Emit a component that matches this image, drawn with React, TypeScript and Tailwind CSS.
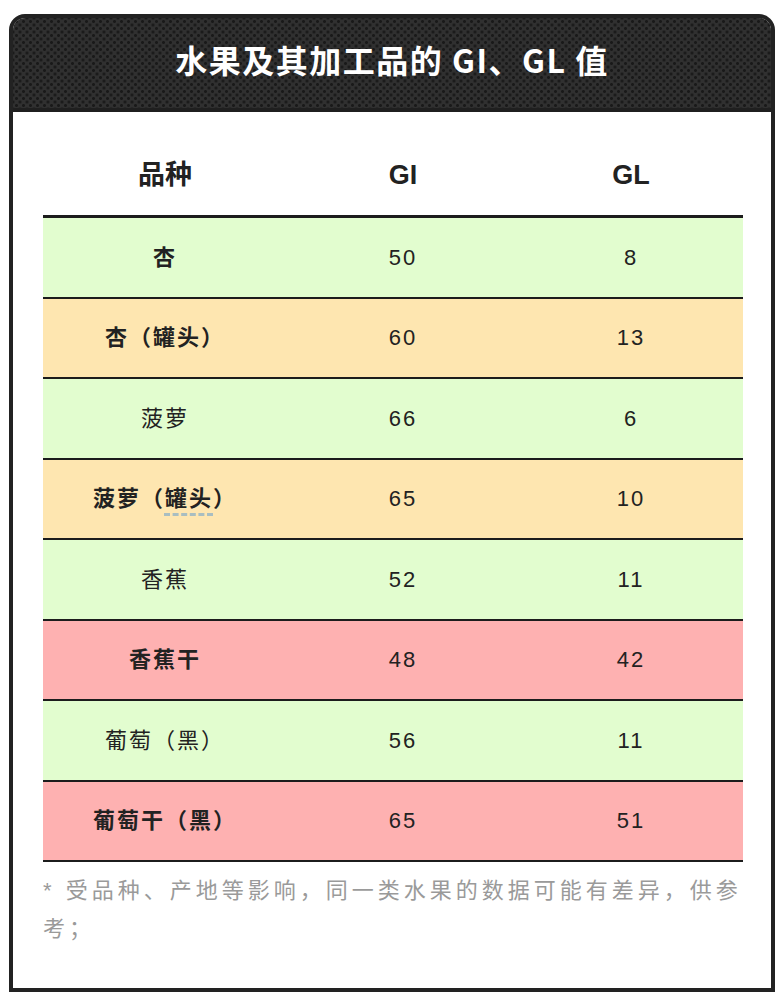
import React from "react";

type Row = { name: React.ReactNode; gi: string; gl: string; bg: string; bold: boolean };

const rows: Row[] = [
  { name: "杏", gi: "50", gl: "8", bg: "bg-[#e2fdcf]", bold: true },
  { name: "杏（罐头）", gi: "60", gl: "13", bg: "bg-[#fee6b0]", bold: true },
  { name: "菠萝", gi: "66", gl: "6", bg: "bg-[#e2fdcf]", bold: false },
  {
    name: (
      <>
        菠萝（
        <span className="underline decoration-dashed decoration-[#a9bec1] decoration-[3px] underline-offset-[7px]">罐头</span>）
      </>
    ),
    gi: "65",
    gl: "10",
    bg: "bg-[#fee6b0]",
    bold: true,
  },
  { name: "香蕉", gi: "52", gl: "11", bg: "bg-[#e2fdcf]", bold: false },
  { name: "香蕉干", gi: "48", gl: "42", bg: "bg-[#feb1b1]", bold: true },
  { name: "葡萄（黑）", gi: "56", gl: "11", bg: "bg-[#e2fdcf]", bold: false },
  { name: "葡萄干（黑）", gi: "65", gl: "51", bg: "bg-[#feb1b1]", bold: true },
];

export default function App() {
  return (
    <div className="w-[784px] h-[1002px] bg-white pt-[14px] font-['Liberation_Sans','Noto_Sans_CJK_SC',sans-serif] text-[#222]">
      <div className="mx-[9px] w-[766px] border-4 border-[#222] rounded-t-[16px] overflow-hidden bg-white">
        <div className="h-[94px] border-b-[4px] border-[#1f1f1f] bg-[#303030] bg-[radial-gradient(circle,#191919_1.2px,transparent_1.7px),radial-gradient(circle,#191919_1.2px,transparent_1.7px)] bg-[length:7px_7px] bg-[position:0_0,3.5px_3.5px] flex items-center justify-center">
          <h1 className="text-white font-bold text-[32px] tracking-[1.5px] font-['Noto_Sans_CJK_SC',sans-serif] leading-none pb-[8px]">
            水果及其加工品的 GI、GL 值
          </h1>
        </div>
        <div className="pl-[30px] pt-[23px] pb-[40px]">
          <div className="w-[700px]">
            <div className="grid grid-cols-[244px_232px_224px] h-[83px] items-center text-center font-bold text-[27px] border-b-[3px] border-[#1c1c1c]">
              <div>品种</div>
              <div>GI</div>
              <div>GL</div>
            </div>
            {rows.map((r, i) => (
              <div
                key={i}
                className={`grid grid-cols-[244px_232px_224px] h-[80.5px] items-center text-center text-[22px] tracking-[2px] border-b-2 border-[#1c1c1c] ${r.bg}`}
              >
                <div className={r.bold ? "font-bold" : "font-normal"}>{r.name}</div>
                <div>{r.gi}</div>
                <div>{r.gl}</div>
              </div>
            ))}
          </div>
          <p className="w-[700px] mt-[10px] text-[22px] leading-[38px] tracking-[4px] text-[#9a9a9a]">
            * 受品种、产地等影响，同一类水果的数据可能有差异，供参考；
          </p>
        </div>
      </div>
    </div>
  );
}
